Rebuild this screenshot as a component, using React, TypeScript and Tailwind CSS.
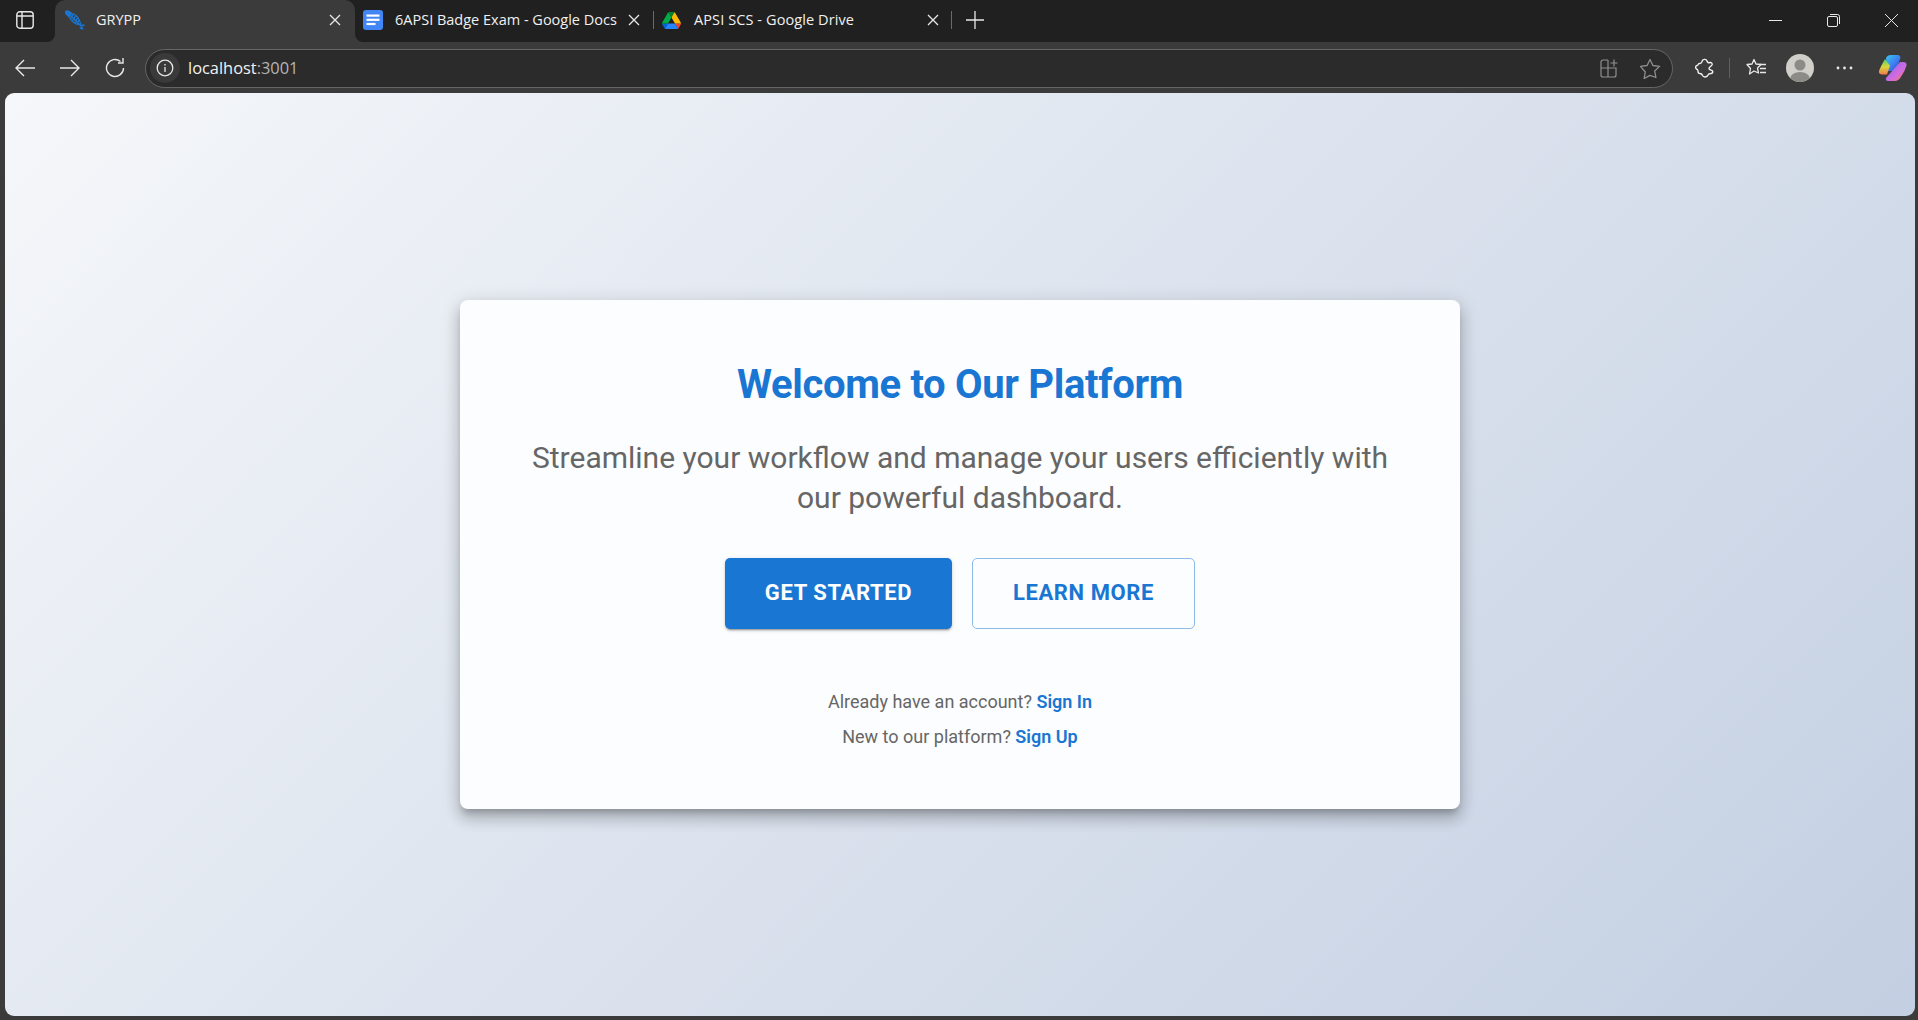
import React from "react";

const uiFont = "font-['Open_Sans','Noto_Sans',sans-serif]";

function Close() {
  return (
    <svg width="12" height="12" viewBox="0 0 12 12" fill="none" stroke="#e8e8e8" strokeWidth="1.3">
      <path d="M1 1l10 10M11 1L1 11" />
    </svg>
  );
}

function Fish() {
  return (
    <svg width="20" height="20" viewBox="0 0 20 20" fill="none" stroke="#1976d2" strokeWidth="1.4">
      <path d="M0.500 1.500C2.500 0.500 5 1.500 6.500 3.500L4 6.500C2 5.500 0.500 3.500 0.500 1.500z" fill="#1976d2" />
      <path d="M6 3.500C9 3.500 13 6.500 14.500 10.500L16 15M4 6.500C5 9 8 12.500 11.500 14L16 15" strokeWidth="1.100" />
      <path d="M8.800 3.500L5.500 9M11 5L7.500 11M13 7L9.500 13M14.300 9.500L11.500 14.500M5 5l11.500 11.500" />
      <path d="M16.500 15.500l3-.5M16.500 16.500l1.500 3M15 17.500l1.500 1.500" />
    </svg>
  );
}

function DocsIcon() {
  return (
    <svg width="20" height="20" viewBox="0 0 20 20">
      <rect width="20" height="20" rx="3" fill="#4285f4" />
      <rect x="3.500" y="4.500" width="13" height="2.200" fill="#fff" />
      <rect x="3.500" y="8.700" width="13" height="2.200" fill="#fff" />
      <rect x="3.500" y="12.900" width="9" height="2.200" fill="#fff" />
    </svg>
  );
}

function DriveIcon() {
  return (
    <svg width="19" height="17" viewBox="0 0 87.300 78">
      <path d="m6.600 66.850 3.850 6.650c.8 1.400 1.950 2.500 3.300 3.300l13.750-23.800h-27.500c0 1.550.4 3.100 1.200 4.500z" fill="#0066da" />
      <path d="m43.650 25-13.750-23.800c-1.350.8-2.500 1.900-3.300 3.300l-25.400 44a9.060 9.060 0 0 0 -1.200 4.500h27.500z" fill="#00ac47" />
      <path d="m73.550 76.800c1.350-.8 2.500-1.900 3.300-3.300l1.600-2.750 7.650-13.250c.8-1.400 1.200-2.950 1.200-4.500h-27.502l5.852 11.500z" fill="#ea4335" />
      <path d="m43.650 25 13.750-23.800c-1.350-.8-2.900-1.200-4.500-1.200h-18.500c-1.600 0-3.150.45-4.500 1.200z" fill="#00832d" />
      <path d="m59.800 53h-32.300l-13.750 23.800c1.350.8 2.900 1.200 4.500 1.200h50.800c1.600 0 3.150-.45 4.500-1.200z" fill="#2684fc" />
      <path d="m73.400 26.500-12.700-22c-.8-1.400-1.950-2.500-3.300-3.300l-13.750 23.800 16.150 28h27.450c0-1.550-.4-3.100-1.200-4.500z" fill="#ffba00" />
    </svg>
  );
}

function Sep() {
  return <div className="w-px h-[18px] mb-[2px] bg-[#6a6a6a]" />;
}

function Flare({ side }: { side: "left" | "right" }) {
  const d = side === "left" ? "M8 0v8H0a8 8 0 0 0 8-8z" : "M0 0v8h8a8 8 0 0 1-8-8z";
  return (
    <svg
      width="8"
      height="8"
      viewBox="0 0 8 8"
      className={side === "left" ? "absolute bottom-0 -left-2" : "absolute bottom-0 -right-2"}
    >
      <path d={d} fill="#3b3b3b" />
    </svg>
  );
}

function TabStrip() {
  return (
    <div className={`h-[42px] bg-[#202020] flex items-center text-[14.500px] text-[#f0f0f0] ${uiFont}`}>
      <div className="w-[55px] flex pl-[16px] pb-[2px]">
        <svg width="18" height="18" viewBox="0 0 18 18" fill="none" stroke="#e8e8e8" strokeWidth="1.400">
          <rect x="0.800" y="0.800" width="16.400" height="16.400" rx="3" />
          <path d="M6 1v16M1 5h16" />
        </svg>
      </div>
      <div className="relative w-[300px] h-[42px] bg-[#3b3b3b] rounded-t-[10px] flex items-center pl-[10px] pr-[14px] pb-[2px]">
        <Flare side="left" />
        <Flare side="right" />
        <Fish />
        <span className="ml-[11px] flex-1">GRYPP</span>
        <Close />
      </div>
      <div className="w-[298px] flex items-center pl-[8px] pr-[13px] h-full pb-[2px]">
        <DocsIcon />
        <span className="ml-[12px] flex-1 whitespace-nowrap overflow-hidden">6APSI Badge Exam - Google Docs</span>
        <Close />
      </div>
      <Sep />
      <div className="w-[297px] flex items-center pl-[8px] pr-[12px] h-full pb-[2px]">
        <DriveIcon />
        <span className="ml-[13px] flex-1 whitespace-nowrap tracking-[0.1px]">APSI SCS - Google Drive</span>
        <Close />
      </div>
      <Sep />
      <div className="ml-[14px] pb-[2px]">
        <svg width="18" height="18" viewBox="0 0 18 18" stroke="#e8e8e8" strokeWidth="1.300" className="block">
          <path d="M9 0v18M0 9h18" />
        </svg>
      </div>
      <div className="flex-1" />
      <div className="flex items-center gap-[45px] pr-[20px] pb-[2px]">
        <svg width="13" height="13" viewBox="0 0 13 13" stroke="#e8e8e8" strokeWidth="1"><path d="M0 6.500h13" /></svg>
        <svg width="13" height="13" viewBox="0 0 13 13" fill="none" stroke="#e8e8e8" strokeWidth="1">
          <rect x="0.500" y="2.500" width="10" height="10" rx="1.500" />
          <path d="M3 0.500h7.500a2 2 0 0 1 2 2V10" />
        </svg>
        <svg width="13" height="13" viewBox="0 0 13 13" stroke="#e8e8e8" strokeWidth="1"><path d="M0 0l13 13M13 0L0 13" /></svg>
      </div>
    </div>
  );
}

function Toolbar() {
  return (
    <div className={`h-[51px] bg-[#3b3b3b] flex items-center pt-[1px] ${uiFont}`}>
      <div className="flex items-center gap-[25px] pl-[15px] w-[145px]">
        <svg width="20" height="18" viewBox="0 0 20 18" fill="none" stroke="#e8e8e8" strokeWidth="1.400"><path d="M20 9H1M9 1L1 9l8 8" /></svg>
        <svg width="20" height="18" viewBox="0 0 20 18" fill="none" stroke="#e8e8e8" strokeWidth="1.400"><path d="M0 9h19M11 1l8 8-8 8" /></svg>
        <svg width="20" height="20" viewBox="0 0 20 20" fill="none" stroke="#e8e8e8" strokeWidth="1.400"><path d="M18.500 10A8.500 8.500 0 1 1 15.500 3.500M18 0v5h-5" /></svg>
      </div>
      <div className="w-[1528px] h-[39px] rounded-full border border-[#666] bg-[#2b2b2b] flex items-center pl-[4px] pr-[11px]">
        <div className="w-[30px] h-[30px] rounded-full bg-[#3a3a3a] flex items-center justify-center">
          <svg width="18" height="18" viewBox="0 0 18 18" fill="none" stroke="#e8e8e8" strokeWidth="1.300">
            <circle cx="9" cy="9" r="7.800" />
            <path d="M9 8v5M9 5v1.400" />
          </svg>
        </div>
        <span className="ml-[8px] text-[16.400px] text-[#f2f2f2]">localhost<span className="text-[#b5b5b5]">:3001</span></span>
        <div className="flex-1" />
        <svg width="19" height="19" viewBox="0 0 19 19" fill="none" stroke="#8f8f8f" strokeWidth="1.200">
          <path d="M8 1H3a2 2 0 0 0-2 2v13a2 2 0 0 0 2 2h11a2 2 0 0 0 2-2V9H1M8 1v17" />
          <path d="M14 0.500v7M10.500 4h7" />
        </svg>
        <svg className="ml-[20px]" width="22" height="21" viewBox="0 0 22 21" fill="none" stroke="#8f8f8f" strokeWidth="1.300">
          <path d="M11 1.500l2.900 6 6.600.9-4.800 4.600 1.200 6.500L11 17.400l-5.900 3.100 1.200-6.500L1.500 8.400l6.600-.9z" strokeLinejoin="round" />
        </svg>
      </div>
      <div className="flex items-center ml-[22px]">
        <svg width="19" height="20" viewBox="0 0 19 20" fill="none" stroke="#f0f0f0" strokeWidth="1.400">
          <path d="M5 5.500C5.500 5.500 6.500 5 7 3.500C7.500 1 11 .5 12 3C12.500 4.500 13.500 5 15 4.500C16.500 4.300 17.500 5.500 17 7C16.500 8 14 9 14 10.500C14 12 16 12 17 12.500C18.500 13.500 17.500 15.500 16 15.500C14.500 15.500 13.500 15.500 13 17C12 19.500 8.500 19.500 7.500 17.500C7 16 6 15.500 5 15.500C3.500 15.500 3 14.500 3 13C3 12 2.500 11.500 1.500 11C0 9.500 .5 8 2 7.500C3 7 3.500 6.500 3.500 6C3.500 5.500 4.500 5.500 5 5.500Z" strokeLinejoin="round" />
        </svg>
        <div className="w-px h-[20px] bg-[#5f5f5f] ml-[15px]" />
        <svg className="ml-[16px]" width="21" height="20" viewBox="0 0 21 20" fill="none" stroke="#e8e8e8" strokeWidth="1.300">
          <path d="M8 1.500l2 4.500 5 .5-3.500 3.500 1 5L8 13l-4.500 3 1-5.500L1 6.500 6 6z" strokeLinejoin="round" />
          <path d="M14 6.500h6M14 10.500h6M14 14.500h6" />
        </svg>
        <div className="ml-[19px] w-[28px] h-[28px] rounded-full bg-[#d1cfca] overflow-hidden">
          <svg width="28" height="28" viewBox="0 0 28 28">
            <circle cx="14" cy="11" r="5.500" fill="#8d8b88" />
            <ellipse cx="14" cy="25" rx="10" ry="7" fill="#8d8b88" />
          </svg>
        </div>
        <svg className="ml-[22px]" width="17" height="4" viewBox="0 0 17 4" fill="#e8e8e8">
          <circle cx="2" cy="2" r="1.400" /><circle cx="8.500" cy="2" r="1.400" /><circle cx="15" cy="2" r="1.400" />
        </svg>
        <svg className="ml-[26px]" width="28" height="27" viewBox="0 0 28 27">
          <defs>
            <linearGradient id="c1" x1="0" y1="0" x2="1" y2="1">
              <stop offset="0" stopColor="#38c8f0" /><stop offset="0.550" stopColor="#3f7cf0" /><stop offset="1" stopColor="#2a3fc0" />
            </linearGradient>
            <linearGradient id="c2" x1="0" y1="0" x2="0" y2="1">
              <stop offset="0" stopColor="#48d07a" /><stop offset="0.500" stopColor="#d8d83a" /><stop offset="1" stopColor="#f07a50" />
            </linearGradient>
            <linearGradient id="c3" x1="0" y1="0" x2="1" y2="1">
              <stop offset="0" stopColor="#7a6cf0" /><stop offset="0.600" stopColor="#d46ae0" /><stop offset="1" stopColor="#f2843a" />
            </linearGradient>
          </defs>
          <path d="M7 3C8 1 9.500 0 11.500 0H19c1.500 0 2 1 2.500 2.500L17 16H8z" fill="url(#c1)" />
          <path d="M6 4C3.500 8 1 13 0 16c-.5 2 1 3.500 3 3.500h5l3-9z" fill="url(#c2)" />
          <path d="M21 7h3.500c2 0 3.500 1.500 3 3.500-1 3-3 8-6 12-1.500 2-3 3.500-5.500 3.500H9c-2 0-2.500-1.500-2-3z" fill="url(#c3)" />
        </svg>
      </div>
    </div>
  );
}

export default function App() {
  return (
    <div className="h-screen w-full flex flex-col bg-[#3b3b3b] overflow-hidden">
      <TabStrip />
      <Toolbar />
      <div className="flex-1 ml-[5px] mr-[3px] mb-[4px] rounded-[9px] bg-[linear-gradient(135deg,#f5f7fa_0%,#c3cfe2_100%)] flex items-center justify-center font-['Roboto',sans-serif]">
        <div className="w-[1000px] h-[509px] rounded-[8px] bg-[#fcfdfe] shadow-[0_6px_6px_-3px_rgba(0,0,0,0.2),0_10px_14px_1px_rgba(0,0,0,0.14),0_4px_18px_3px_rgba(0,0,0,0.12)] flex flex-col items-center pt-[61px] px-[48px]">
          <h1 className="text-[40px] leading-[1.2] font-bold tracking-[-0.33px] text-[#1976d2]">Welcome to Our Platform</h1>
          <p className="mt-[29px] text-[30px] leading-[40px] text-[#666] text-center w-[880px]">
            Streamline your workflow and manage your users efficiently with our powerful dashboard.
          </p>
          <div className="mt-[40px] flex gap-[20px]">
            <button className="w-[227px] h-[71px] pb-[2px] rounded-[5px] bg-[#1976d2] text-white text-[22px] font-bold tracking-[0.6px] shadow-[0_3px_1px_-2px_rgba(0,0,0,0.2),0_2px_2px_0_rgba(0,0,0,0.14),0_1px_5px_0_rgba(0,0,0,0.12)]">
              GET STARTED
            </button>
            <button className="w-[223px] h-[71px] pb-[2px] rounded-[5px] border border-[#8dbbe9] text-[#1976d2] text-[22px] font-bold tracking-[0.6px]">
              LEARN MORE
            </button>
          </div>
          <div className="mt-[55px] text-[18px] leading-[35px] text-[#666] text-center">
            <p>Already have an account? <a className="font-semibold text-[#1976d2]">Sign In</a></p>
            <p>New to our platform? <a className="font-semibold text-[#1976d2]">Sign Up</a></p>
          </div>
        </div>
      </div>
    </div>
  );
}
